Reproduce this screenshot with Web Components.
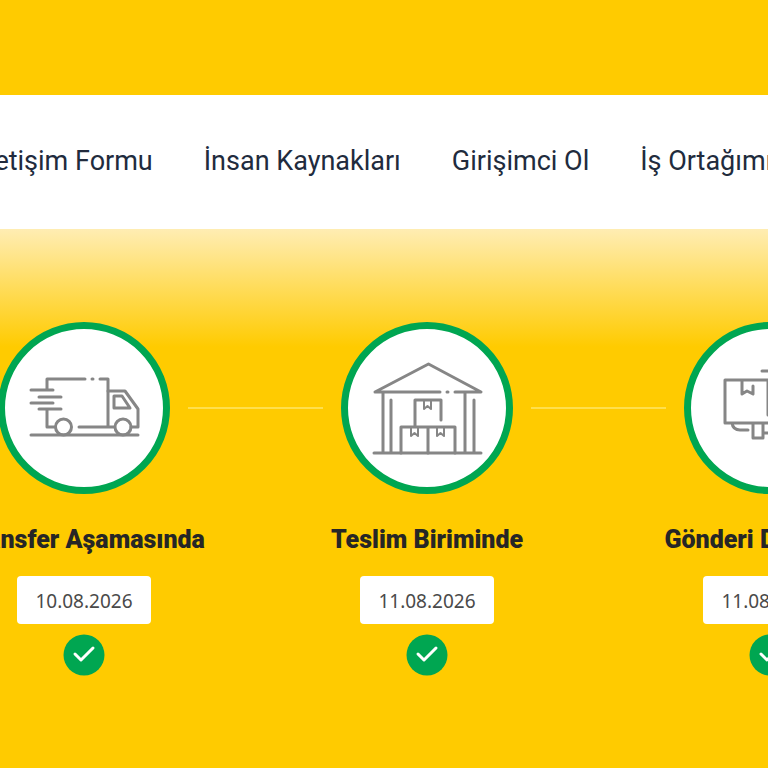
<!DOCTYPE html>
<html lang="tr">
<head>
<meta charset="UTF-8">
<meta name="viewport" content="width=device-width, initial-scale=1">
<title>Gönderi Takip</title>
<style>
  html {
    background: #ffcb00;
  }

  body {
    margin: 0;
    overflow-x: hidden;
    font-family: Roboto, "Noto Sans", sans-serif;
    color: #262626;
  }
</style>
</head>
<body>
  <tracking-page>
    <site-nav slot="nav">
      <nav-link href="#iletisim">İletişim Formu</nav-link>
      <nav-link href="#kaynaklar">İnsan Kaynakları</nav-link>
      <nav-link href="#girisimci">Girişimci Ol</nav-link>
      <nav-link href="#ortak">İş Ortağımız Ol</nav-link>
    </site-nav>
    <step-list>
      <cargo-step icon="truck" date="10.08.2026">Transfer Aşamasında</cargo-step>
      <step-line></step-line>
      <cargo-step icon="warehouse" date="11.08.2026">Teslim Biriminde</cargo-step>
      <step-line></step-line>
      <cargo-step icon="delivery" date="11.08.2026">Gönderi Dağıtımda</cargo-step>
    </step-list>
  </tracking-page>

<script>
  const icons = {
    truck: `
      <path d="M23 32V21H61M68 21h1M76 21H84V69M7 32H29M15 39H37M7 45H29M15 51H37M23 51V69H31M55 69H90"/>
      <path d="M84 33H101L114 51V69H107M90 38H98L106 50H90ZM7 77H114"/>
      <circle cx="39.5" cy="69" r="8"/><circle cx="99" cy="69" r="8"/>`,
    warehouse: `
      <path d="M73 34H8L61.5 6L114 34H88M80 34h1M16 34V95M24 42V95M98 34V95M107 42V95M7 95H114"/>
      <path d="M48 68V42H74V62M34 95V69H88V95M61 69V95"/>
      <path d="M57 42V51L60.5 48L64 51V42M44 69V78L47.5 75L51 78V69M70 69V78L73.5 75L77 78V69" stroke-width="2"/>`,
    delivery: `
      <path d="M58 57V22H15V65H66M58 22H70M32 22V36L37 33L43 36V28M52 13H76L84 22V65M22 65Q23 72 30 72H38M43 65V80H53V65M53 75H98"/>
      <circle cx="88" cy="75" r="8"/>`
  };

  class TrackingPage extends HTMLElement {
    constructor() {
      super();
      this.attachShadow({ mode: 'open' });

      this.shadowRoot.innerHTML = `
        <style>
          :host {
            display: block;
            padding-top: 95px;
          }

          main {
            padding: 93px 0 92px;
            background: linear-gradient(#ffedb3, #ffcb00 118px);
            overflow: hidden;
          }
        </style>
        <slot name="nav"></slot>
        <main><slot></slot></main>
      `;
    }
  }

  class SiteNav extends HTMLElement {
    constructor() {
      super();
      this.attachShadow({ mode: 'open' });

      this.shadowRoot.innerHTML = `
        <style>
          :host {
            display: block;
            background: #fff;
            overflow: hidden;
          }

          nav {
            display: flex;
            justify-content: center;
            gap: 51px;
            padding: 48px 0 50px 30px;
          }
        </style>
        <nav><slot></slot></nav>
      `;
    }
  }

  class NavLink extends HTMLElement {
    constructor() {
      super();
      this.attachShadow({ mode: 'open' });

      this.shadowRoot.innerHTML = `
        <style>
          :host {
            display: block;
            flex: none;
          }

          a {
            display: block;
            font-size: 27px;
            line-height: 36px;
            color: #212b3d;
            text-decoration: none;
            white-space: nowrap;
          }
        </style>
        <a href="${this.getAttribute('href')}"><slot></slot></a>
      `;
    }
  }

  class StepList extends HTMLElement {
    constructor() {
      super();
      this.attachShadow({ mode: 'open' });

      this.shadowRoot.innerHTML = `
        <style>
          :host {
            display: flex;
            justify-content: center;
            padding-left: 86px;
          }
        </style>
        <slot></slot>
      `;
    }
  }

  class StepLine extends HTMLElement {
    constructor() {
      super();
      this.attachShadow({ mode: 'open' });

      this.shadowRoot.innerHTML = `
        <style>
          :host {
            display: block;
            flex: none;
            width: 135px;
            padding: 85px 18px;
          }

          div {
            height: 2px;
            background: #ffdf4c;
          }
        </style>
        <div></div>
      `;
    }
  }

  class CargoStep extends HTMLElement {
    constructor() {
      super();
      this.attachShadow({ mode: 'open' });

      this.shadowRoot.innerHTML = `
        <style>
          :host {
            display: flex;
            flex-direction: column;
            align-items: center;
            flex: none;
            width: 172px;
          }

          .circle {
            display: flex;
            align-items: center;
            justify-content: center;
            box-sizing: border-box;
            width: 172px;
            height: 172px;
            border: 7px solid #00a651;
            border-radius: 50%;
            background: #fff;
          }

          .circle svg {
            width: 120px;
            height: 100px;
            fill: none;
            stroke: #868686;
            stroke-width: 3;
            stroke-linecap: round;
            stroke-linejoin: round;
          }

          h2 {
            margin: 28px 0 18px;
            font-size: 25px;
            font-weight: 900;
            line-height: 36px;
            white-space: nowrap;
          }

          time {
            padding: 2px 18px 0;
            border-radius: 4px;
            background: #fff;
            font-family: "Noto Sans", sans-serif;
            font-size: 19px;
            line-height: 46px;
            color: #4a4a4a;
          }

          .done {
            width: 42px;
            height: 42px;
            margin-top: 10px;
          }
        </style>
        <div class="circle">
          <svg viewBox="0 0 120 100" aria-hidden="true">${icons[this.getAttribute('icon')]}</svg>
        </div>
        <h2><slot></slot></h2>
        <time>${this.getAttribute('date')}</time>
        <svg class="done" viewBox="0 0 42 42" role="img" aria-label="Tamamlandı">
          <circle cx="21" cy="21" r="20.5" fill="#00a651"/>
          <path d="M12 20L18 26L30 14" fill="none" stroke="#fff" stroke-width="3" stroke-linecap="round" stroke-linejoin="round"/>
        </svg>
      `;
    }
  }

  customElements.define('tracking-page', TrackingPage);
  customElements.define('site-nav', SiteNav);
  customElements.define('nav-link', NavLink);
  customElements.define('step-list', StepList);
  customElements.define('step-line', StepLine);
  customElements.define('cargo-step', CargoStep);
</script>
</body>
</html>
